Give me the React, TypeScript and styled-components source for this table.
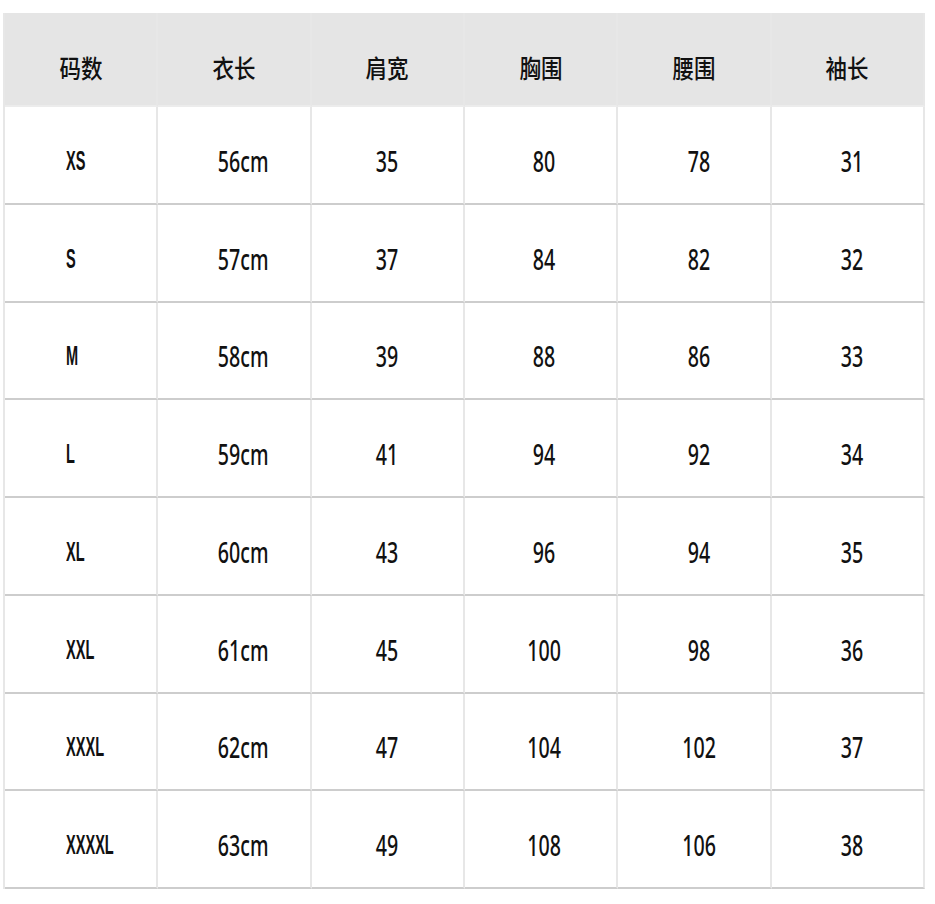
import styled, { createGlobalStyle } from 'styled-components';

const GlobalStyle = createGlobalStyle`
  html, body {
    margin: 0;
    padding: 0;
    background: #ffffff;
  }
`;

const headers = ['码数', '衣长', '肩宽', '胸围', '腰围', '袖长'];

const rows = [
  ['XS', '56cm', '35', '80', '78', '31'],
  ['S', '57cm', '37', '84', '82', '32'],
  ['M', '58cm', '39', '88', '86', '33'],
  ['L', '59cm', '41', '94', '92', '34'],
  ['XL', '60cm', '43', '96', '94', '35'],
  ['XXL', '61cm', '45', '100', '98', '36'],
  ['XXXL', '62cm', '47', '104', '102', '37'],
  ['XXXXL', '63cm', '49', '108', '106', '38'],
];

const Chart = styled.div`
  margin: 13px 0 0 3px;
  width: 922px;
  display: grid;
  grid-template-columns: repeat(6, 1fr);
  grid-template-rows: 94px repeat(8, 97.75px);
  border-left: 2px solid #e7e7e7;
  box-sizing: border-box;
`;

const Cell = styled.div<{ $head?: boolean; $shift?: number }>`
  display: flex;
  align-items: center;
  justify-content: center;
  box-sizing: border-box;
  padding-top: ${(p) => (p.$head ? 16 : 12)}px;
  padding-left: ${(p) => p.$shift ?? 0}px;
  background: ${(p) => (p.$head ? '#e5e5e5' : '#ffffff')};
  border-right: 2px solid #e7e7e7;
  border-bottom: 2px solid ${(p) => (p.$head ? '#ececec' : '#cdcdcd')};
  color: #111;
  overflow: hidden;
`;

const SizeCell = styled(Cell)`
  justify-content: flex-start;
  padding-left: 61px;
`;

const HeadText = styled.span`
  display: inline-block;
  font-family: 'Noto Sans CJK SC', sans-serif;
  font-size: 25px;
  font-weight: 500;
  line-height: 1;
  transform: scaleX(0.86);
`;

const Value = styled.span`
  display: inline-block;
  font-family: 'Noto Sans', sans-serif;
  font-size: 28px;
  font-weight: 500;
  line-height: 1;
  white-space: nowrap;
  transform: scaleX(0.7);
`;

const SizeLabel = styled.span`
  display: inline-block;
  font-family: 'Liberation Sans', sans-serif;
  font-size: 28px;
  font-weight: 700;
  line-height: 1;
  white-space: nowrap;
  transform: scaleX(0.52);
  transform-origin: left center;
`;

// per-column nudge of the values, as in the source image
const shifts = [0, 18, 0, 6, 10, 10];

export default function App() {
  return (
    <>
      <GlobalStyle />
      <Chart>
        {headers.map((h) => (
          <Cell key={h} $head>
            <HeadText>{h}</HeadText>
          </Cell>
        ))}
        {rows.map((row) =>
          row.map((v, i) =>
            i === 0 ? (
              <SizeCell key={row[0]}>
                <SizeLabel>{v}</SizeLabel>
              </SizeCell>
            ) : (
              <Cell key={row[0] + i} $shift={shifts[i]}>
                <Value>{v}</Value>
              </Cell>
            )
          )
        )}
      </Chart>
    </>
  );
}
